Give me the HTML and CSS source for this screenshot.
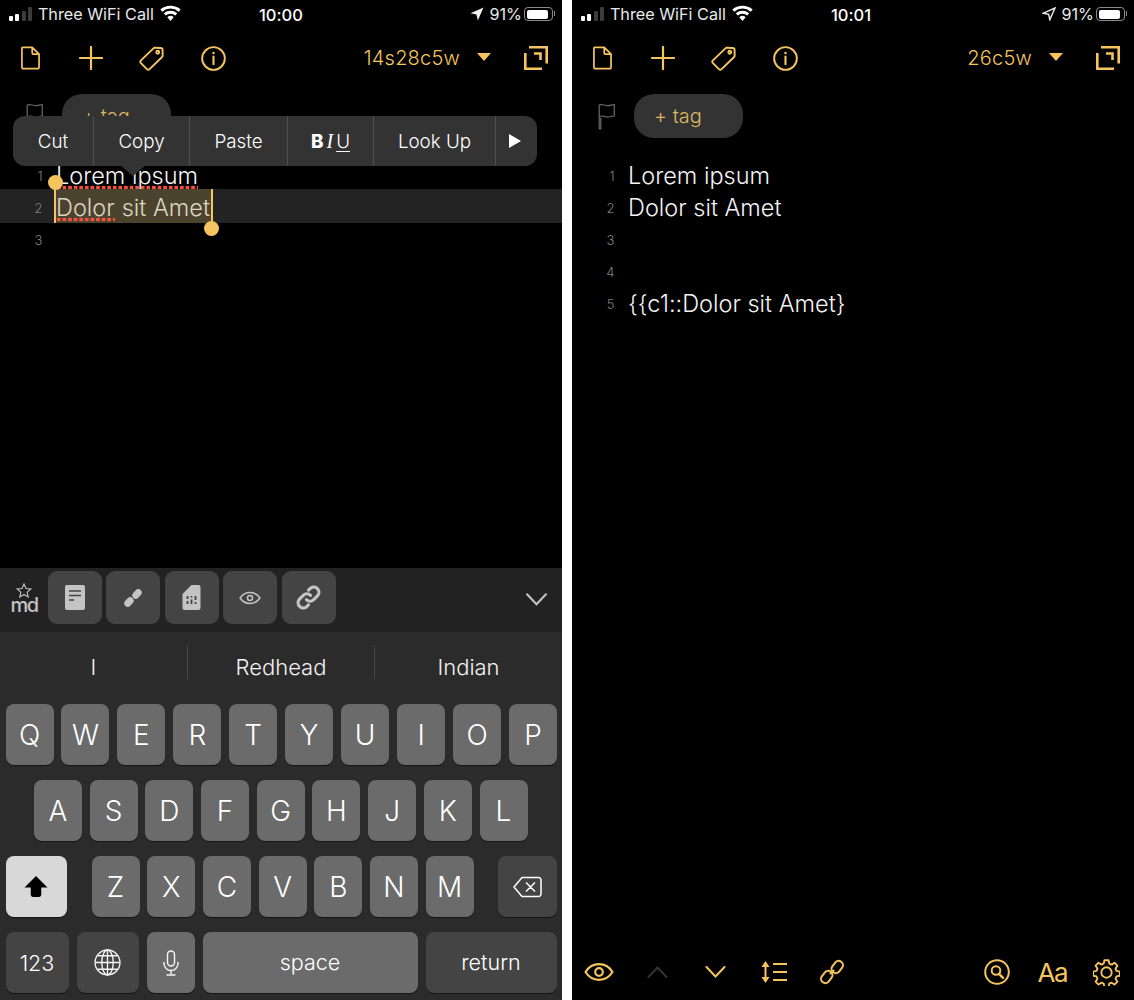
FILE: index.html
```html
<!DOCTYPE html>
<html lang="en">
<head>
    <meta charset="UTF-8">
    <meta name="viewport" content="width=device-width, initial-scale=1.0">
    <title>Markdown Notes</title>
    <link rel="stylesheet" href="styles.css">
</head>
<body>
    <svg class="defs" width="0" height="0">
        <defs>
            <symbol id="i-file" viewBox="0 0 24 28"><path d="M3 1.500h11l8 8v15a2 2 0 0 1-2 2H4a2 2 0 0 1-2-2v-22a1 1 0 0 1 1-1zM14 1.500v6a2 2 0 0 0 2 2h6"/></symbol>
            <symbol id="i-plus" viewBox="0 0 24 24"><path d="M12 1v22M1 12h22"/></symbol>
            <symbol id="i-tag" viewBox="0 0 26 26"><path d="M15 2.500a2 2 0 0 1 1.500-.6l6 .1a2 2 0 0 1 2 2l.1 6a2 2 0 0 1-.6 1.500L11 24a2 2 0 0 1-2.800 0L2 17.800A2 2 0 0 1 2 15z"/><circle cx="19.500" cy="6.500" r="1.500"/></symbol>
            <symbol id="i-info" viewBox="0 0 26 26"><circle cx="13" cy="13" r="11.800"/><path d="M13 11v8" stroke-width="2.200"/><circle cx="13" cy="7.300" r=".6" stroke-width="1.400"/></symbol>
            <symbol id="i-expand" viewBox="0 0 24 24"><path d="M5 1.300H22.700V17.500M1.300 7V22.700H18M10 7.500H16.500V14"/></symbol>
            <symbol id="i-flag" viewBox="0 0 18 26"><path d="M1.500 25V2c3-1.500 5 .5 8 .5 2.500 0 4-1 6.500-1v11c-2.500 0-4 1-6.500 1-3 0-5-2-8-.5M1.500 25h1.500V14"/></symbol>
            <symbol id="i-eye" viewBox="0 0 30 18"><path d="M1.500 9C5 3.500 9.500 1.200 15 1.200S25 3.500 28.500 9C25 14.500 20.500 16.800 15 16.800S5 14.500 1.500 9z"/><circle cx="15" cy="9" r="3.800"/></symbol>
            <symbol id="i-chain" viewBox="0 0 26 26"><rect x="14" y="1.500" width="8.500" height="13" rx="4" transform="rotate(38 18.250 8)"/><rect x="3.500" y="11.500" width="8.500" height="13" rx="4" transform="rotate(38 7.750 18)"/><path d="M11.500 14.500l3-3"/></symbol>
        </defs>
    </svg>

    <div class="screens">
        <section class="phone">
            <div class="statusbar">
                <div class="status-left">
                    <span class="signal"><i class="on"></i><i class="on"></i><i></i><i></i></span>
                    <span>Three WiFi Call</span>
                    <svg class="wifi" viewBox="0 0 20 15"><path d="M10 15l-3-3.500a4.500 4.500 0 0 1 6 0zM5.500 9.800L3.600 7.700a10 10 0 0 1 12.800 0l-1.900 2.100a7 7 0 0 0-9 0zM2.200 6.200L.3 4.100a15 15 0 0 1 19.400 0l-1.900 2.100a12 12 0 0 0-15.600 0z"/></svg>
                </div>
                <div class="status-time">10:00</div>
                <div class="status-right">
                    <svg class="arrow" viewBox="0 0 14 14"><path d="M13.500.5L7.800 13.500 6.500 7.500.5 6.200z"/></svg>
                    <span>91%</span>
                    <span class="battery"><span class="battery-fill"></span></span>
                </div>
            </div>

            <div class="toolbar">
                <svg class="tb-file ic"><use href="#i-file"/></svg>
                <svg class="tb-plus ic"><use href="#i-plus"/></svg>
                <svg class="tb-tag ic"><use href="#i-tag"/></svg>
                <svg class="tb-info ic"><use href="#i-info"/></svg>
                <span class="counter">14s28c5w</span>
                <span class="caret"></span>
                <svg class="tb-expand ic"><use href="#i-expand"/></svg>
            </div>

            <div class="tagrow">
                <svg class="flag"><use href="#i-flag"/></svg>
                <span class="tag">+ tag</span>
            </div>

            <div class="editor">
                <div class="line"><span class="num">1</span><span class="spell">Lorem ipsum</span></div>
                <div class="line line-active"><span class="num">2</span><span class="sel"><span class="spell spell-short">Dolor</span> sit Amet</span></div>
                <div class="line"><span class="num">3</span></div>
            </div>

            <div class="menu">
                <span class="menu-item menu-cut">Cut</span>
                <span class="menu-item menu-copy">Copy</span>
                <span class="menu-item menu-paste">Paste</span>
                <span class="menu-item menu-biu"><b>B</b><em>I</em><u>U</u></span>
                <span class="menu-item menu-look">Look Up</span>
                <span class="menu-item menu-more"><span class="more-arrow"></span></span>
            </div>
            <span class="menu-tip"></span>
            <span class="handle handle-start"></span>
            <span class="handle handle-end"></span>

            <div class="accessory">
                <div class="md-logo">
                    <svg viewBox="0 0 16 15"><path d="M8 1l2 4.500 4.800.5-3.600 3.200 1 4.800L8 11.500 3.800 14l1-4.800L1.200 6l4.800-.5z"/></svg>
                    <span>md</span>
                </div>
                <span class="acc-btn">
                    <svg class="acc-doc" viewBox="0 0 20 25"><rect width="20" height="25" rx="2"/><path d="M4 6h12M4 10.500h12M4 15h5"/></svg>
                </span>
                <span class="acc-btn">
                    <svg class="acc-chain" viewBox="0 0 20 20"><rect x="11" y="0" width="7" height="11" rx="3.500" transform="rotate(42 14.500 5.500)"/><rect x="2" y="9" width="7" height="11" rx="3.500" transform="rotate(42 5.500 14.500)"/><path d="M8 12l4-4"/></svg>
                </span>
                <span class="acc-btn">
                    <svg class="acc-sim" viewBox="0 0 18 25"><path d="M9 0h7a2 2 0 0 1 2 2v21a2 2 0 0 1-2 2H2a2 2 0 0 1-2-2V9z"/><path class="cut" d="M5 11v3M5 16v3M9 11v1.500M9 14.500v4.500M13 11v4M13 17v2"/></svg>
                </span>
                <span class="acc-btn">
                    <svg class="acc-eye" viewBox="0 0 30 18"><path d="M1.500 9C5 3.500 9.500 1.500 15 1.500S25 3.500 28.500 9C25 14.500 20.500 16.500 15 16.500S5 14.500 1.500 9z"/><circle cx="15" cy="9" r="3.500"/></svg>
                </span>
                <span class="acc-btn">
                    <svg class="acc-link" viewBox="0 0 24 24"><path d="M10 14a5 5 0 0 0 7 0l4-4a5 5 0 0 0-7-7l-2 2M14 10a5 5 0 0 0-7 0l-4 4a5 5 0 0 0 7 7l2-2"/></svg>
                </span>
                <svg class="acc-close" viewBox="0 0 20 12"><path d="M1 1l9 9.500L19 1"/></svg>
            </div>

            <div class="keyboard">
                <div class="suggest">
                    <span>I</span>
                    <span>Redhead</span>
                    <span>Indian</span>
                </div>
                <div class="keys">
                    <div class="keyrow">
                        <span class="key">Q</span><span class="key">W</span><span class="key">E</span><span class="key">R</span><span class="key">T</span><span class="key">Y</span><span class="key">U</span><span class="key">I</span><span class="key">O</span><span class="key">P</span>
                    </div>
                    <div class="keyrow keyrow-mid">
                        <span class="key">A</span><span class="key">S</span><span class="key">D</span><span class="key">F</span><span class="key">G</span><span class="key">H</span><span class="key">J</span><span class="key">K</span><span class="key">L</span>
                    </div>
                    <div class="keyrow keyrow-shift">
                        <span class="key key-shift">
                            <svg viewBox="0 0 24 22"><path d="M12 1L23 12h-6v7a2 2 0 0 1-2 2H9a2 2 0 0 1-2-2v-7H1z"/></svg>
                        </span>
                        <div class="keygroup">
                            <span class="key">Z</span><span class="key">X</span><span class="key">C</span><span class="key">V</span><span class="key">B</span><span class="key">N</span><span class="key">M</span>
                        </div>
                        <span class="key key-dark key-back">
                            <svg viewBox="0 0 30 22"><path d="M9.500 1.500H26a2.500 2.500 0 0 1 2.500 2.500v14a2.500 2.500 0 0 1-2.500 2.500H9.500L1.500 11zM13.500 6.500l9 9M22.500 6.500l-9 9"/></svg>
                        </span>
                    </div>
                    <div class="keyrow keyrow-bottom">
                        <span class="key key-dark key-123">123</span>
                        <span class="key key-dark key-globe">
                            <svg viewBox="0 0 26 26"><circle cx="13" cy="13" r="12"/><ellipse cx="13" cy="13" rx="5.500" ry="12"/><path d="M13 1v24M1.500 13h23M3.500 6.500h19M3.500 19.500h19"/></svg>
                        </span>
                        <span class="key key-mic">
                            <svg viewBox="0 0 16 26"><rect x="4.500" y="1" width="7" height="15" rx="3.500"/><path d="M1 12v1.500a7 7 0 0 0 14 0V12M8 20.500V25M3.500 25h9"/></svg>
                        </span>
                        <span class="key key-space">space</span>
                        <span class="key key-dark key-return">return</span>
                    </div>
                </div>
            </div>
        </section>

        <section class="phone phone-right">
            <div class="statusbar">
                <div class="status-left">
                    <span class="signal"><i class="on"></i><i class="on"></i><i></i><i></i></span>
                    <span>Three WiFi Call</span>
                    <svg class="wifi" viewBox="0 0 20 15"><path d="M10 15l-3-3.500a4.500 4.500 0 0 1 6 0zM5.500 9.800L3.600 7.700a10 10 0 0 1 12.800 0l-1.900 2.100a7 7 0 0 0-9 0zM2.200 6.200L.3 4.100a15 15 0 0 1 19.400 0l-1.900 2.100a12 12 0 0 0-15.600 0z"/></svg>
                </div>
                <div class="status-time">10:01</div>
                <div class="status-right">
                    <svg class="arrow arrow-outline" viewBox="0 0 14 14"><path d="M13 1L7.800 12.800 6.700 7.300 1.200 6.200z"/></svg>
                    <span>91%</span>
                    <span class="battery"><span class="battery-fill"></span></span>
                </div>
            </div>

            <div class="toolbar">
                <svg class="tb-file ic"><use href="#i-file"/></svg>
                <svg class="tb-plus ic"><use href="#i-plus"/></svg>
                <svg class="tb-tag ic"><use href="#i-tag"/></svg>
                <svg class="tb-info ic"><use href="#i-info"/></svg>
                <span class="counter">26c5w</span>
                <span class="caret"></span>
                <svg class="tb-expand ic"><use href="#i-expand"/></svg>
            </div>

            <div class="tagrow">
                <svg class="flag"><use href="#i-flag"/></svg>
                <span class="tag">+ tag</span>
            </div>

            <div class="editor">
                <div class="line"><span class="num">1</span><span>Lorem ipsum</span></div>
                <div class="line"><span class="num">2</span><span>Dolor sit Amet</span></div>
                <div class="line"><span class="num">3</span></div>
                <div class="line"><span class="num">4</span></div>
                <div class="line"><span class="num">5</span><span>{{c1::Dolor sit Amet}</span></div>
            </div>

            <div class="bottombar">
                <svg class="bb-eye ic"><use href="#i-eye"/></svg>
                <svg class="bb-up" viewBox="0 0 20 12"><path d="M1 11l9-9.500L19 11"/></svg>
                <svg class="bb-down" viewBox="0 0 20 12"><path d="M1 1l9 9.500L19 1"/></svg>
                <svg class="bb-lines" viewBox="0 0 26 22"><path class="solid" d="M4.500 0L8.500 6h-8zM4.500 22L8.500 16h-8z"/><path d="M4.500 4v14M12 3h14M12 11h14M12 19h14"/></svg>
                <svg class="bb-chain ic"><use href="#i-chain"/></svg>
                <span class="bb-spacer"></span>
                <svg class="bb-search" viewBox="0 0 26 26"><circle cx="13" cy="13" r="11.800"/><circle cx="12" cy="11.500" r="4.300"/><path d="M15 14.800l4 4" stroke-width="2.400"/></svg>
                <span class="bb-font">Aa</span>
                <svg class="bb-gear" viewBox="0 0 26 26"><path d="M11 1.200h4l.7 3.300 2.200.9 2.800-1.800 2.800 2.800-1.800 2.800.9 2.200 3.200.7v4l-3.200.7-.9 2.200 1.800 2.800-2.800 2.800-2.800-1.800-2.200.9-.7 3.200h-4l-.7-3.200-2.200-.9-2.800 1.800-2.800-2.800 1.800-2.800-.9-2.200-3.200-.7v-4l3.200-.7.900-2.200-1.800-2.800 2.800-2.800 2.800 1.800 2.200-.9z"/><circle cx="13" cy="13" r="5"/></svg>
            </div>
        </section>
    </div>
</body>
</html>
```

FILE: styles.css
```css
* {
    box-sizing: border-box;
}

html, body {
    margin: 0;
    height: 1000px;
    overflow: hidden;
}

body {
    background-color: #ffffff;
    font-family: 'Inter', 'Roboto', sans-serif;
    font-feature-settings: "calt" 0;
    color: #ffffff;
}

.defs {
    position: absolute;
}

.screens {
    display: flex;
    gap: 10px;
    height: 1000px;
}

.phone {
    position: relative;
    display: flex;
    flex-direction: column;
    width: 562px;
    height: 1000px;
    background-color: #000000;
    overflow: hidden;
}

/* status bar */
.statusbar {
    position: relative;
    display: flex;
    justify-content: space-between;
    align-items: center;
    height: 29px;
    padding: 0 8px 1px 9px;
    font-size: 16.200px;
    color: #e8e8e8;
}

.status-left,
.status-right {
    display: flex;
    align-items: center;
}

.status-time {
    position: absolute;
    left: 259px;
    top: 5px;
    font-size: 16.500px;
    font-weight: 500;
    color: #ffffff;
}

.signal {
    display: flex;
    align-items: flex-end;
    gap: 2.300px;
    height: 14px;
    margin-right: 6px;
}

.signal i {
    display: block;
    width: 4px;
    border-radius: 1px;
    background-color: #3c3c3c;
}

.signal i.on {
    background-color: #ffffff;
}

.signal i:nth-child(1) { height: 5px; }
.signal i:nth-child(2) { height: 7px; }
.signal i:nth-child(3) { height: 10px; }
.signal i:nth-child(4) { height: 14px; }

.wifi {
    width: 21px;
    height: 16px;
    margin-left: 6px;
    margin-top: -3px;
    fill: #ffffff;
}

.arrow {
    width: 14px;
    height: 14px;
    margin-right: 5px;
    fill: #f0f0f0;
}

.arrow-outline {
    fill: none;
    stroke: #f0f0f0;
    stroke-width: 1.400;
}

.battery {
    display: block;
    position: relative;
    width: 29px;
    height: 14px;
    margin-left: 2px;
    margin-right: 1px;
    padding: 1.500px;
    border: 1px solid #8a8a8a;
    border-radius: 4px;
}

.battery::after {
    content: "";
    position: absolute;
    right: -3px;
    top: 3px;
    width: 1.500px;
    height: 5px;
    background-color: #8a8a8a;
}

.battery-fill {
    display: block;
    width: 90%;
    height: 100%;
    border-radius: 2px;
    background-color: #ffffff;
}

/* toolbar */
.toolbar {
    display: flex;
    align-items: center;
    height: 58px;
    padding: 0 14px 0 20px;
    color: #f5c45e;
}

.ic {
    fill: none;
    stroke: #f5c45e;
    stroke-width: 2;
    stroke-linejoin: round;
    stroke-linecap: round;
}

.tb-file {
    width: 21px;
    height: 24px;
}

.tb-plus {
    width: 24px;
    height: 24px;
    margin-left: 38px;
    stroke-width: 2.200;
}

.tb-tag {
    width: 25px;
    height: 25px;
    margin-left: 36px;
}

.tb-info {
    width: 25px;
    height: 25px;
    margin-left: 37px;
}

.counter {
    margin-left: auto;
    font-size: 20px;
    font-weight: 300;
    letter-spacing: .2px;
}

.caret {
    width: 0;
    height: 0;
    margin-left: 17px;
    margin-right: 33px;
    margin-top: -2px;
    border-left: 7.500px solid transparent;
    border-right: 7.500px solid transparent;
    border-top: 8px solid #f5c45e;
}

.tb-expand {
    width: 24px;
    height: 24px;
    stroke-width: 2.600;
    stroke-linejoin: miter;
    stroke-linecap: butt;
}

/* tag row */
.tagrow {
    display: flex;
    align-items: center;
    height: 44px;
    margin-top: 7px;
    padding-left: 25px;
}

.flag {
    width: 20px;
    height: 27px;
    fill: none;
    stroke: #666666;
    stroke-width: 1.200;
}

.tag {
    display: flex;
    align-items: center;
    width: 109px;
    height: 44px;
    margin-left: 17px;
    padding-left: 20px;
    border-radius: 20px;
    background-color: #333333;
    color: #dcb662;
    font-size: 20px;
    font-weight: 300;
}

/* editor */
.editor {
    margin-top: 21px;
    font-size: 23.500px;
    font-weight: 300;
    color: #f2f2f2;
}

.line {
    display: flex;
    align-items: center;
    height: 32px;
}

.line-active {
    height: 34px;
    margin-top: -2px;
    background-color: #232323;
}

.num {
    width: 56px;
    padding-top: 2px;
    padding-right: 13.500px;
    text-align: right;
    font-size: 13px;
    color: #808080;
}

.line-active .num {
    padding-top: 4px;
}

.spell {
    background-image: radial-gradient(circle, #f0523f 1.800px, transparent 2.100px);
    background-size: 5.600px 5px;
    background-repeat: repeat-x;
    background-position: 0 100%;
}

.sel {
    display: flex;
    align-items: center;
    gap: 7px;
    width: 159px;
    height: 34px;
    margin-left: -2px;
    padding-top: 2px;
    background-color: #4c432e;
    border-left: 2px solid #f5c45e;
    border-right: 2px solid #f5c45e;
    color: #dcd5c2;
    white-space: nowrap;
}

/* selection menu */
.menu {
    position: absolute;
    left: 13px;
    top: 116px;
    display: flex;
    width: 524px;
    height: 50px;
    border-radius: 12px;
    background-color: #333333;
    font-size: 18.800px;
    font-weight: 300;
}

.menu-item {
    display: flex;
    align-items: center;
    justify-content: center;
    border-left: 1px solid #4f4f4f;
}

.menu-cut { width: 80px; border-left: 0; }
.menu-copy { width: 96px; }
.menu-paste { width: 98px; }
.menu-biu { width: 86px; gap: 3px; }
.menu-look { width: 122px; }
.menu-more { width: 42px; }

.menu-biu b {
    font-weight: 800;
}

.menu-biu em {
    font-family: 'Liberation Serif', serif;
    font-size: 20px;
}

.menu-biu u {
    text-underline-offset: 3px;
}

.more-arrow {
    width: 0;
    height: 0;
    margin-right: 4px;
    border-top: 7.500px solid transparent;
    border-bottom: 7.500px solid transparent;
    border-left: 12px solid #ffffff;
}

.menu-tip {
    position: absolute;
    left: 120px;
    top: 165px;
    width: 0;
    height: 0;
    border-left: 13.500px solid transparent;
    border-right: 13.500px solid transparent;
    border-top: 11px solid #333333;
}

.handle {
    position: absolute;
    width: 15px;
    height: 15px;
    border-radius: 50%;
    background-color: #f5c45e;
}

.handle-start { left: 48px; top: 175px; }
.handle-end { left: 204px; top: 221px; }

/* keyboard accessory */
.accessory {
    position: absolute;
    left: 0;
    top: 568px;
    display: flex;
    align-items: flex-start;
    gap: 4.400px;
    width: 562px;
    height: 64px;
    padding: 3px 0 0 48px;
    background-color: #222222;
}

.md-logo {
    position: absolute;
    left: 9px;
    top: 15px;
    width: 30px;
    text-align: center;
    color: #c4c4c4;
    font-size: 20px;
    font-weight: 500;
    line-height: 15px;
    letter-spacing: -1.500px;
}

.md-logo svg {
    display: block;
    width: 16px;
    height: 15px;
    margin: 0 auto;
    fill: none;
    stroke: #c4c4c4;
    stroke-width: 1.100;
}

.acc-btn {
    display: flex;
    align-items: center;
    justify-content: center;
    width: 54px;
    height: 53px;
    border-radius: 9px;
    background-color: #444444;
}

.acc-doc {
    width: 20px;
    height: 25px;
}

.acc-doc rect {
    fill: #c4c4c4;
}

.acc-doc path {
    stroke: #444444;
    stroke-width: 1.600;
}

.acc-chain {
    width: 18px;
    height: 18px;
    fill: #c4c4c4;
    stroke: #c4c4c4;
    stroke-width: 1;
}

.acc-sim {
    width: 19px;
    height: 25px;
    fill: #c4c4c4;
}

.acc-sim .cut {
    fill: none;
    stroke: #444444;
    stroke-width: 1.800;
}

.acc-eye {
    width: 22px;
    height: 14px;
    fill: none;
    stroke: #c4c4c4;
    stroke-width: 2;
}

.acc-link {
    width: 25px;
    height: 25px;
    fill: none;
    stroke: #c4c4c4;
    stroke-width: 3;
    stroke-linecap: round;
}

.acc-close {
    width: 21px;
    height: 13px;
    margin-left: auto;
    margin-right: 15px;
    margin-top: 22px;
    fill: none;
    stroke: #c4c4c4;
    stroke-width: 2;
    stroke-linecap: round;
}

/* keyboard */
.keyboard {
    position: absolute;
    left: 0;
    top: 632px;
    width: 562px;
    height: 368px;
    background-color: #2b2b2b;
}

.suggest {
    display: grid;
    grid-template-columns: 187px 187px 188px;
    height: 72px;
    padding-top: 13px;
    font-size: 22px;
    font-weight: 300;
    color: #f2f2f2;
}

.suggest span {
    display: flex;
    align-items: center;
    justify-content: center;
    height: 34px;
    padding-top: 10px;
}

.suggest span + span {
    border-left: 1px solid #484848;
}

.keys {
    display: flex;
    flex-direction: column;
    gap: 15px;
    padding: 0 5px 0 5.500px;
}

.keyrow {
    display: flex;
    justify-content: space-between;
    height: 61px;
}

.keyrow-mid {
    justify-content: flex-start;
    gap: 7.700px;
    padding-left: 28.500px;
}

.key {
    display: flex;
    align-items: center;
    justify-content: center;
    width: 48px;
    height: 61px;
    border-radius: 8px;
    background-color: #6b6b6b;
    box-shadow: 0 1px 0 #151515;
    color: #ffffff;
    font-size: 28px;
    font-weight: 300;
}

.key-dark {
    background-color: #444444;
}

.keyrow-shift {
    justify-content: flex-start;
}

.key-shift {
    width: 61px;
    background-color: #d8d8d8;
}

.key-shift svg {
    width: 26px;
    height: 23px;
    fill: #000000;
}

.keygroup {
    display: flex;
    gap: 7.700px;
    margin-left: 25px;
}

.key-back {
    width: 59px;
    margin-left: auto;
}

.key-back svg {
    width: 31px;
    height: 22px;
    fill: none;
    stroke: #ffffff;
    stroke-width: 1.500;
    stroke-linejoin: round;
}

.keyrow-bottom {
    justify-content: flex-start;
    gap: 8px;
}

.key-123,
.key-space,
.key-return {
    font-size: 21.500px;
}

.key-123 {
    width: 63px;
}

.key-globe {
    width: 62px;
}

.key-globe svg {
    width: 27px;
    height: 27px;
    fill: none;
    stroke: #f5f5f5;
    stroke-width: 1.300;
}

.key-mic svg {
    width: 16px;
    height: 26px;
    fill: none;
    stroke: #f5f5f5;
    stroke-width: 1.400;
}

.key-space {
    width: 215px;
    padding-bottom: 2px;
}

.key-return {
    width: 131px;
    padding-bottom: 2px;
}

/* bottom bar on the second screen */
.bottombar {
    position: absolute;
    left: 0;
    right: 0;
    bottom: 0;
    display: flex;
    align-items: center;
    height: 56px;
    padding: 0 14px 0 12px;
    color: #f5c45e;
}

.bb-eye {
    width: 30px;
    height: 18px;
    stroke-width: 2.200;
}

.bb-up,
.bb-down {
    width: 21px;
    height: 12px;
    fill: none;
    stroke-width: 2;
    stroke-linecap: round;
}

.bb-up {
    margin-left: 33px;
    stroke: #333333;
}

.bb-down {
    margin-left: 37px;
    stroke: #f5c45e;
}

.bb-lines {
    width: 26px;
    height: 22px;
    margin-left: 35px;
    fill: none;
    stroke: #f5c45e;
    stroke-width: 2;
}

.bb-lines .solid {
    fill: #f5c45e;
    stroke: none;
}

.bb-chain {
    width: 26px;
    height: 26px;
    margin-left: 32px;
}

.bb-spacer {
    flex: 1;
}

.bb-search {
    width: 26px;
    height: 26px;
    fill: none;
    stroke: #f5c45e;
    stroke-width: 2;
    stroke-linecap: round;
}

.bb-font {
    margin-left: 27px;
    font-size: 26px;
    font-weight: 400;
    letter-spacing: -1.500px;
}

.bb-gear {
    width: 27px;
    height: 27px;
    margin-left: 26px;
    fill: none;
    stroke: #f5c45e;
    stroke-width: 1.800;
    stroke-linejoin: round;
}
```
